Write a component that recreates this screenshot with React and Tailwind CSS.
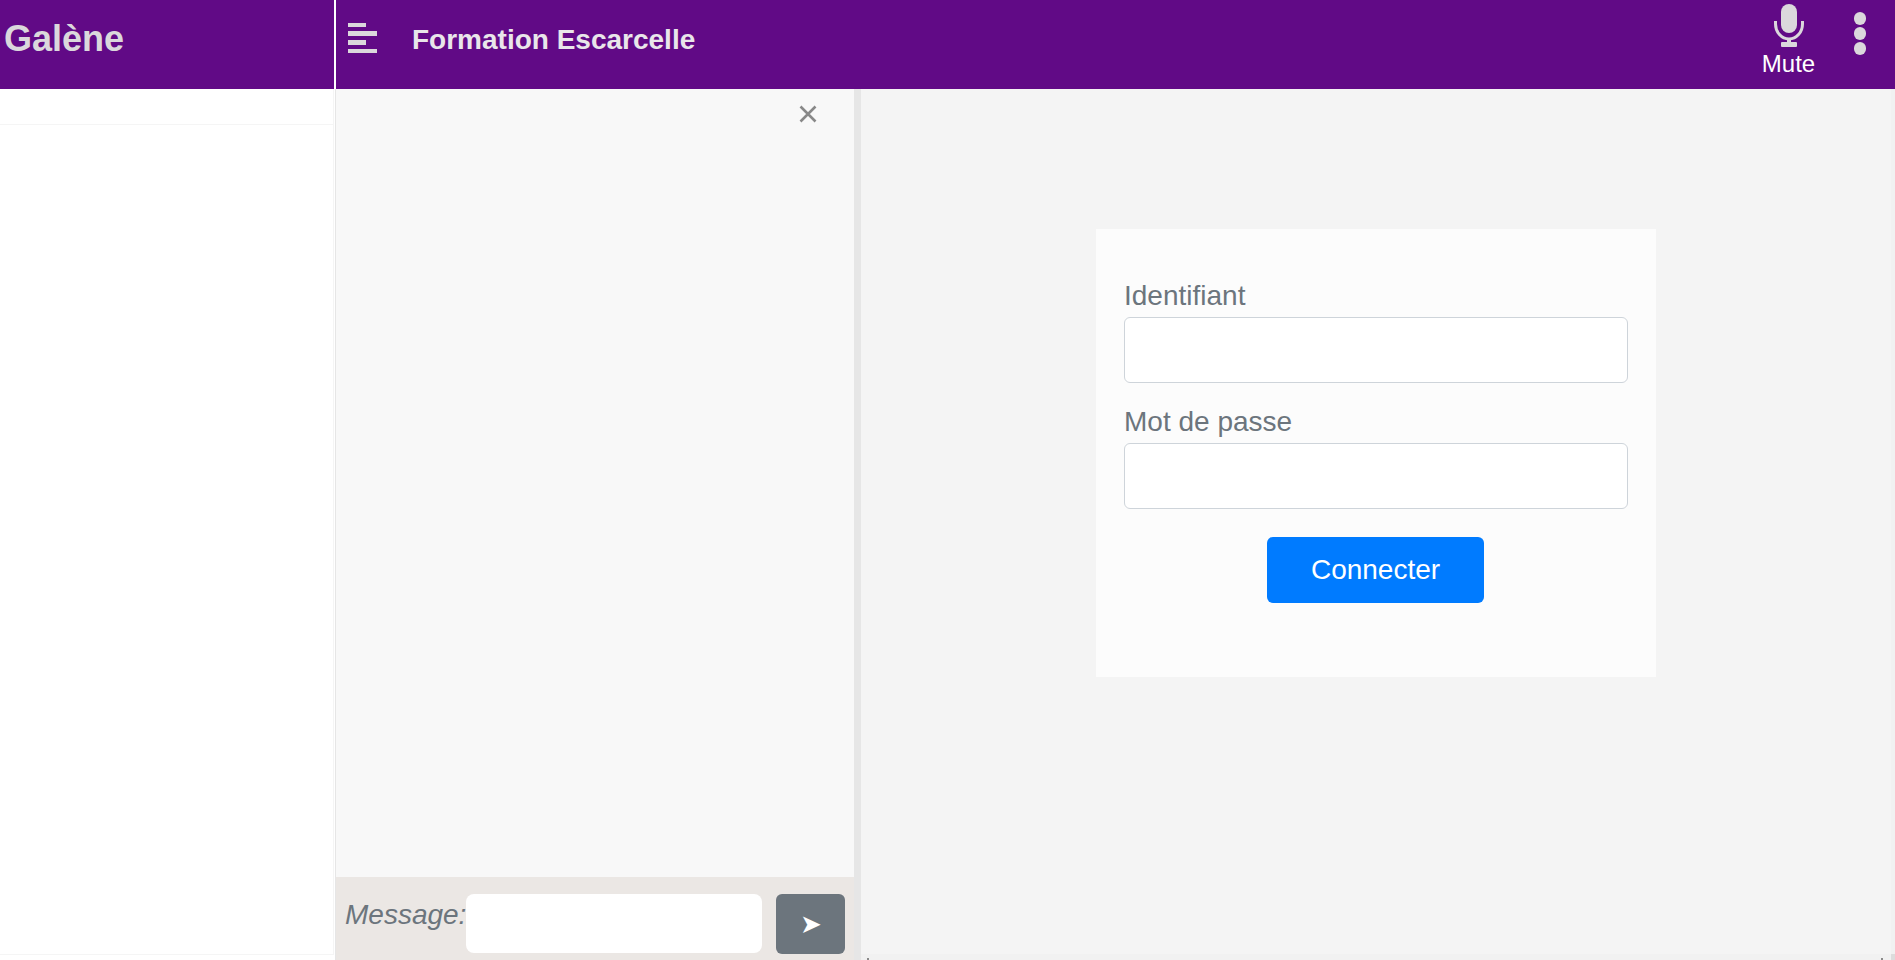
const sans = { fontFamily: '"Liberation Sans", Arial, sans-serif' }

/* Mic glyph from the top bar, drawn in a 30x43 box. */
function MicIcon() {
  return (
    <svg width="30" height="43" viewBox="0 0 30 43" fill="#dbd8dc" className="block">
      <rect x="7" y="0" width="16" height="29" rx="8" />
      <path d="M1.500 17v3a13.500 15 0 0 0 27 0v-3" fill="none" stroke="#dbd8dc" strokeWidth="3" />
      <rect x="13" y="34" width="4" height="5" />
      <rect x="7" y="38" width="16" height="5" rx="1" />
    </svg>
  )
}

/* Four bars, like fa-align-left. */
function MenuIcon() {
  return (
    <div className="flex w-[29px] flex-col items-start gap-1">
      <span className="h-1 w-[18px] bg-[#dbd8dc]" />
      <span className="h-[5px] w-full bg-[#dbd8dc]" />
      <span className="h-[5px] w-[18px] bg-[#dbd8dc]" />
      <span className="h-1 w-full bg-[#dbd8dc]" />
    </div>
  )
}

function Field({ label, className }) {
  return (
    <div className={className}>
      <label className="block h-[38px] text-[28px] leading-[34px] text-[#6c757d]">{label}</label>
      <input
        type="text"
        className="block h-[66px] w-full rounded-[6px] border border-[#ced4da] bg-white"
      />
    </div>
  )
}

export default function App() {
  return (
    <div style={sans} className="flex h-screen w-full overflow-hidden bg-white">
      {/* left column */}
      <aside className="flex h-full w-[336px] shrink-0 flex-col">
        <div className="flex h-[89px] shrink-0 items-center border-r-2 border-white bg-[#610a86] pb-[11px] pl-1">
          <h1 className="text-[36px] font-bold leading-none text-[#dbd8dc]">Galène</h1>
        </div>
        <div className="flex flex-1 flex-col border-r border-r-[#e6e6e6] bg-white pr-px">
          <div className="h-[36px] shrink-0 border-r border-b border-[#f5f5f5]" />
          <div className="flex-1 border-r border-b border-[#f5f5f5]" />
          <div className="h-[5px] shrink-0" />
        </div>
      </aside>

      {/* main column */}
      <div className="flex h-full min-w-0 flex-1 flex-col">
        <header className="flex h-[89px] shrink-0 items-center bg-[#610a86]">
          <div className="ml-3 mb-[13px]">
            <MenuIcon />
          </div>
          <div className="ml-[35px] mb-[9px] text-[28px] font-bold text-[#e9e6ea]">Formation Escarcelle</div>
          <div className="ml-auto flex h-full items-start">
            <div className="mr-[35px] mt-1 flex w-[60px] flex-col items-center">
              <MicIcon />
              <span className="mt-[2px] text-[24px] leading-[30px] text-white">Mute</span>
            </div>
            <div className="mr-[29px] mt-3 flex flex-col gap-[2.500px]">
              <span className="size-[12.500px] rounded-full bg-[#dbd8dc]" />
              <span className="size-[12.500px] rounded-full bg-[#dbd8dc]" />
              <span className="size-[12.500px] rounded-full bg-[#dbd8dc]" />
            </div>
          </div>
        </header>

        <div className="flex min-h-0 flex-1">
          {/* chat */}
          <section className="flex h-full w-[518px] shrink-0 flex-col bg-[#f8f8f8]">
            <div className="flex min-h-0 flex-1 justify-end">
              <span className="mr-[37px] mt-4 h-fit text-[#888888]">
                <svg width="18" height="18" viewBox="0 0 18 18" stroke="currentColor" strokeWidth="2.600" className="block">
                  <path d="M1.500 1.500l15 15M16.500 1.500l-15 15" />
                </svg>
              </span>
            </div>
            <form className="flex h-[83px] shrink-0 bg-[#ebe7e4] pl-[9px] pt-[17px]">
              <label className="w-[121px] shrink-0 text-[28px] italic leading-[42px] text-[#6c757d]">Message:</label>
              <input type="text" className="h-[59px] w-[296px] rounded-[8px] bg-white" />
              <button
                type="button"
                className="ml-[14px] flex h-[60px] w-[69px] items-center justify-center rounded-[6px] bg-[#6c757d] text-[26px] text-white"
              >
                ➤
              </button>
            </form>
          </section>
          <div className="w-[7px] shrink-0 bg-[#e6e6e6]" />

          {/* login pane */}
          <main className="flex min-w-0 flex-1 flex-col bg-[#f4f4f4]">
            <div className="flex min-h-0 flex-1">
              <div className="ml-[235px] mt-[140px] h-[448px] w-[560px] bg-[#fcfcfc] px-7 pt-[50px]">
                <Field label="Identifiant" />
                <Field label="Mot de passe" className="mt-[22px]" />
                <div className="mt-[28px] flex justify-center pr-px">
                  <button
                    type="button"
                    className="h-[66px] w-[217px] rounded-[6px] bg-[#007bff] text-[28px] text-white"
                  >
                    Connecter
                  </button>
                </div>
              </div>
              <div className="ml-auto w-1 shrink-0 bg-[#f1f1f1]" />
            </div>
            {/* thin scrollbar track along the bottom */}
            <div className="flex h-[6px] shrink-0 items-end bg-[#f1f1f1]">
              <span className="ml-[6px] h-[2px] w-[2px] bg-[#8a8a8a]" />
              <span className="ml-auto mr-[8px] h-[2px] w-[2px] bg-[#8a8a8a]" />
              <span className="h-[6px] w-1 bg-[#dcdcdc]" />
            </div>
          </main>
        </div>
      </div>
    </div>
  )
}
